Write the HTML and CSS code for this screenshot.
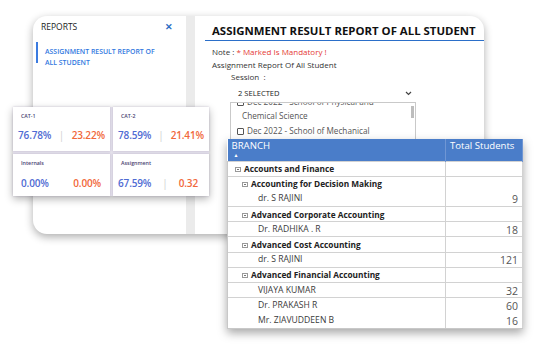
FILE: index.html
```html
<!DOCTYPE html>
<html lang="en">
<head>
    <meta charset="UTF-8">
    <meta name="viewport" content="width=device-width, initial-scale=1.0">
    <title>Assignment Result Report</title>
    <link rel="stylesheet" href="styles.css">
</head>
<body>
    <div class="stage">
        <div class="window">
            <div class="side">
                <div class="side-head">
                    <span>REPORTS</span>
                    <span class="close">&#x2715;</span>
                </div>
                <div class="nav-item">ASSIGNMENT RESULT REPORT OF ALL STUDENT</div>
            </div>
            <div class="divider"></div>
            <div class="main">
                <h1 class="title">ASSIGNMENT RESULT REPORT OF ALL STUDENT</h1>
                <div class="form">
                    <div>Note : <span class="req">* Marked Is Mandatory !</span></div>
                    <div>Assignment Report Of All Student</div>
                    <div class="session">Session &nbsp;:</div>
                    <div class="select">
                        <span>2 SELECTED</span>
                        <svg class="chev" width="7" height="5" viewBox="0 0 7 5"><path d="M1 1 L3.5 3.5 L6 1" fill="none" stroke="#444" stroke-width="1.2"/></svg>
                    </div>
                    <div class="options">
                        <div class="options-inner">
                            <div class="opt"><span class="box"></span>Dec 2022 - School of Physical and Chemical Science</div>
                            <div class="opt"><span class="box"></span>Dec 2022 - School of Mechanical Engineering</div>
                        </div>
                        <div class="scroll"></div>
                    </div>
                </div>
            </div>
        </div>

        <div class="stats">
            <div class="stat">
                <div class="stat-label">CAT-1</div>
                <div class="stat-values"><span class="pass">76.78%</span><span class="sep">|</span><span class="fail">23.22%</span></div>
            </div>
            <div class="stat">
                <div class="stat-label">CAT-2</div>
                <div class="stat-values"><span class="pass">78.59%</span><span class="sep">|</span><span class="fail">21.41%</span></div>
            </div>
            <div class="stat">
                <div class="stat-label">Internals</div>
                <div class="stat-values internals"><span class="pass">0.00%</span><span class="fail">0.00%</span></div>
            </div>
            <div class="stat">
                <div class="stat-label">Assignment</div>
                <div class="stat-values assignment"><span class="pass">67.59%</span><span class="sep">|</span><span class="fail">0.32</span></div>
            </div>
        </div>

        <table class="grid">
            <thead>
                <tr>
                    <th class="branch">BRANCH<span class="sort">&#9650;</span></th>
                    <th class="total">Total Students</th>
                </tr>
            </thead>
            <tbody>
                <tr class="group lvl0"><td><span class="tog"></span>Accounts and Finance</td><td></td></tr>
                <tr class="group lvl1 no-line"><td><span class="tog"></span>Accounting for Decision Making</td><td></td></tr>
                <tr class="leaf"><td>dr. S RAJINI</td><td class="num">9</td></tr>
                <tr class="group lvl1"><td><span class="tog"></span>Advanced Corporate Accounting</td><td></td></tr>
                <tr class="leaf"><td>Dr. RADHIKA . R</td><td class="num">18</td></tr>
                <tr class="group lvl1"><td><span class="tog"></span>Advanced Cost Accounting</td><td></td></tr>
                <tr class="leaf"><td>dr. S RAJINI</td><td class="num">121</td></tr>
                <tr class="group lvl1"><td><span class="tog"></span>Advanced Financial Accounting</td><td></td></tr>
                <tr class="leaf"><td>VIJAYA KUMAR</td><td class="num">32</td></tr>
                <tr class="leaf no-line"><td>Dr. PRAKASH R</td><td class="num">60</td></tr>
                <tr class="leaf"><td>Mr. ZIAVUDDEEN B</td><td class="num">16</td></tr>
            </tbody>
        </table>
    </div>
</body>
</html>
```

FILE: styles.css
```css
* {
    box-sizing: border-box;
}

body {
    margin: 0;
    background: #fff;
    font-family: "Open Sans", "Noto Sans", sans-serif;
    color: #222;
}

.stage {
    position: relative;
    width: 539px;
    height: 344px;
    overflow: hidden;
    padding: 16px 0 0 33px;
}

/* main report window */
.window {
    display: flex;
    width: 451px;
    height: 218px;
    background: #fff;
    border-radius: 14px;
    overflow: hidden;
    box-shadow: 0 3px 8px rgba(0, 0, 0, 0.32);
}

.side {
    width: 153px;
    padding: 5px 13px 0 3px;
}

.side-head {
    display: flex;
    justify-content: space-between;
    align-items: center;
    padding-left: 5px;
    font-size: 8.5px;
    line-height: 12px;
    color: #222;
}

.close {
    color: #2b6cc4;
    font-weight: 700;
    font-size: 8.5px;
}

.nav-item {
    width: 132px;
    margin-top: 9px;
    height: 21px;
    padding: 5px 0 0 7px;
    border-left: 2px solid #3b7be0;
    font-size: 6.9px;
    line-height: 10.5px;
    font-weight: 600;
    color: #3178e0;
}

.divider {
    width: 9px;
    background: #ebebeb;
}

.main {
    flex: 1;
}

.title {
    margin: 0 0 0 10px;
    padding: 8px 0 2px 7px;
    font-size: 11.4px;
    line-height: 14px;
    font-weight: 700;
    color: #111;
    border-bottom: 1.5px solid #2b6fc9;
    white-space: nowrap;
}

.form {
    padding: 5px 0 0 17px;
    font-size: 8px;
    line-height: 12.5px;
    color: #333;
}

.req {
    color: #e53935;
}

.session {
    padding-left: 19px;
}

.select {
    display: flex;
    justify-content: space-between;
    align-items: center;
    width: 186px;
    height: 16px;
    margin: 2px 0 0 18px;
    padding: 0 4px 0 8px;
    font-size: 7.6px;
    color: #222;
}

.options {
    position: relative;
    width: 186px;
    height: 46px;
    margin-left: 18px;
    border: 1px solid #c9c9c9;
    overflow: hidden;
}

.options-inner {
    width: 160px;
    margin-top: -8px;
}

.opt {
    padding-left: 11px;
    text-indent: -5px;
    font-size: 8.2px;
    line-height: 14.5px;
    color: #555;
}

.box {
    display: inline-block;
    width: 7px;
    height: 7px;
    margin-right: 3px;
    border: 1px solid #555;
    border-radius: 1px;
    vertical-align: -1px;
}

.scroll {
    position: absolute;
    right: 1px;
    top: 3px;
    width: 3px;
    height: 12px;
    background: #bdbdbd;
}

/* pass / fail stat tiles */
.stats {
    position: absolute;
    left: 13px;
    top: 107px;
    display: grid;
    grid-template-columns: 97px 96px;
    grid-template-rows: 44px 42px;
    gap: 3px;
    background: #e3e0ea;
    box-shadow: 0 3px 8px rgba(0, 0, 0, 0.3);
}

.stat {
    background: #fff;
    padding-top: 6px;
    box-shadow: 0 0 2px rgba(80, 60, 120, 0.25);
}

.stat-label {
    padding-left: 8px;
    font-size: 5.3px;
    line-height: 6px;
    font-weight: 600;
    color: #4b3f72;
}

.stat-values {
    display: flex;
    justify-content: space-between;
    align-items: center;
    margin-top: 9px;
    padding: 0 5px;
    font-size: 10px;
    line-height: 14px;
    font-weight: 600;
    letter-spacing: -0.15px;
}

.stat-values.internals {
    padding: 0 9px 0 8px;
    margin-top: 10px;
}

.stat-values.assignment {
    padding-right: 11px;
    margin-top: 10px;
}

.pass {
    color: #4f6bd3;
}

.fail {
    color: #f1673a;
}

.sep {
    color: #d0d0d0;
    font-weight: 400;
}

/* branch table */
.grid {
    position: absolute;
    left: 227px;
    top: 139px;
    width: 296px;
    border-collapse: collapse;
    background: #fff;
    box-shadow: 0 4px 9px rgba(0, 0, 0, 0.35);
}

.grid th {
    height: 22px;
    padding: 0 4px;
    background: #4a7dc9;
    color: #fff;
    font-size: 9.6px;
    font-weight: 400;
    text-align: left;
    vertical-align: top;
    line-height: 14px;
    border-right: 1px solid #6f96d4;
}

.grid th.branch {
    width: 218px;
}

.sort {
    display: block;
    font-size: 5px;
    line-height: 5px;
    margin-left: 2px;
}

.grid td {
    height: 15.2px;
    padding: 0 4px;
    border-top: 1px solid #d2d2d2;
    border-right: 1px solid #d2d2d2;
    font-size: 8.6px;
    line-height: 13px;
    color: #3a3a3a;
    white-space: nowrap;
}

.grid tr.no-line + tr td {
    border-top-color: transparent;
}

.grid td:first-child {
    border-left: 1px solid #c8c8c8;
}

.grid tbody tr:last-child td {
    border-bottom: 1px solid #c8c8c8;
}

.group td {
    font-weight: 700;
    font-size: 8.3px;
    color: #222;
}

.lvl0 td:first-child {
    padding-left: 7px;
}

.lvl1 td:first-child {
    padding-left: 14px;
}

.leaf td:first-child {
    padding-left: 30px;
}

.grid td.num {
    text-align: right;
    font-size: 10.5px;
    color: #555;
    line-height: 12px;
    padding-top: 1px;
}

.tog {
    display: inline-block;
    position: relative;
    width: 6px;
    height: 5px;
    margin-right: 3px;
    border: 1px solid #999;
    vertical-align: 0;
}

.tog::after {
    content: "";
    position: absolute;
    left: 1px;
    right: 1px;
    top: 1px;
    height: 1px;
    background: #777;
}
```
